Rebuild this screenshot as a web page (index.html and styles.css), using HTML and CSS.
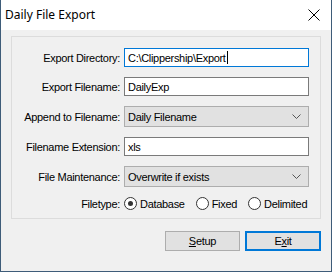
FILE: index.html
```html
<!DOCTYPE html>
<html>
<head>
<meta charset="utf-8">
<link rel="stylesheet" href="styles.css">
</head>
<body>
<div class="window">
  <div class="titlebar">
    <span class="title">Daily File Export</span>
    <svg class="close" width="12" height="12" viewBox="0 0 12 12"><path d="M0.5 0.5 L11.5 11.5 M11.5 0.5 L0.5 11.5" stroke="#000" stroke-width="1" fill="none"/></svg>
  </div>
  <div class="client">
    <div class="group">
      <div class="row">
        <label class="lbl">Export Directory:</label>
        <div class="field input focus"><span>C:\Clippership\Export</span><span class="caret"></span></div>
      </div>
      <div class="row">
        <label class="lbl">Export Filename:</label>
        <div class="field input"><span>DailyExp</span></div>
      </div>
      <div class="row tall">
        <label class="lbl">Append to Filename:</label>
        <div class="field select"><span>Daily Filename</span>
          <svg class="chev" width="9" height="5" viewBox="0 0 9 5"><path d="M0.5 0.5 L4.5 4.5 L8.5 0.5" stroke="#555" stroke-width="1" fill="none"/></svg>
        </div>
      </div>
      <div class="row">
        <label class="lbl">Filename Extension:</label>
        <div class="field input"><span>xls</span></div>
      </div>
      <div class="row tall">
        <label class="lbl">File Maintenance:</label>
        <div class="field select"><span>Overwrite if exists</span>
          <svg class="chev" width="9" height="5" viewBox="0 0 9 5"><path d="M0.5 0.5 L4.5 4.5 L8.5 0.5" stroke="#555" stroke-width="1" fill="none"/></svg>
        </div>
      </div>
      <div class="row radio-row">
        <label class="lbl">Filetype:</label>
        <div class="radios">
          <span class="radio"><span class="dot on"></span>Database</span>
          <span class="radio"><span class="dot"></span>Fixed</span>
          <span class="radio"><span class="dot"></span>Delimited</span>
        </div>
      </div>
    </div>
    <div class="buttons">
      <div class="btn"><span><u>S</u>etup</span></div>
      <div class="btn default"><span>E<u>x</u>it</span></div>
    </div>
  </div>
</div>
</body>
</html>
```
FILE: styles.css
```css
html, body {
  margin: 0;
  padding: 0;
  background: #fff;
}
body {
  width: 332px;
  height: 272px;
  font-family: "Liberation Sans", Arial, sans-serif;
  font-size: 11px;
  letter-spacing: -0.3px;
  color: #000;
}
.window {
  box-sizing: border-box;
  width: 332px;
  height: 272px;
  border: 1px solid #3e5c79;
  border-top: none;
  background: #f0f0f0;
  display: flex;
  flex-direction: column;
}
.titlebar {
  height: 30px;
  background: #fff;
  display: flex;
  align-items: center;
  justify-content: space-between;
  padding: 0 11px 0 4px;
  flex: none;
  letter-spacing: 0;
}
.title {
  font-family: "Noto Sans", "Open Sans", sans-serif;
  font-size: 12px;
  color: #000;
  margin-top: -1px;
}
.close {
  display: block;
  margin-top: -1px;
}
.client {
  flex: 1;
  padding: 6px 10px 0 10px;
}
.group {
  border: 1px solid #dcdcdc;
  height: 183px;
  box-sizing: border-box;
  padding: 11px 0 0 0;
  display: flex;
  flex-direction: column;
  gap: 10px;
}
.row {
  display: grid;
  grid-template-columns: 108px 185px;
  column-gap: 4px;
  align-items: center;
  height: 19px;
}
.row.tall {
  height: 21px;
}
.row.radio-row {
  height: 13px;
}
.lbl {
  text-align: right;
  white-space: nowrap;
}
.field {
  box-sizing: border-box;
  height: 100%;
  display: flex;
  align-items: center;
  padding-left: 3px;
  white-space: nowrap;
}
.input {
  background: #fff;
  border: 1px solid #7a7a7a;
}
.input.focus {
  border-color: #0078d7;
}
.caret {
  display: inline-block;
  width: 1px;
  height: 13px;
  background: #000;
  margin-left: 1px;
}
.select {
  background: #e1e1e1;
  border: 1px solid #adadad;
  justify-content: space-between;
  padding: 0 7px 0 3px;
}
.chev {
  display: block;
}
.radios {
  display: flex;
  align-items: center;
}
.radio {
  display: flex;
  align-items: center;
  margin-right: 11px;
}
.dot {
  box-sizing: border-box;
  width: 13px;
  height: 13px;
  border-radius: 50%;
  border: 1px solid #333;
  background: #fff;
  margin-right: 3px;
  position: relative;
  flex: none;
}
.dot.on::after {
  content: "";
  position: absolute;
  left: 3px;
  top: 3px;
  width: 5px;
  height: 5px;
  border-radius: 50%;
  background: #333;
}
.buttons {
  display: flex;
  justify-content: flex-end;
  gap: 5px;
  margin-top: 12px;
}
.btn {
  box-sizing: border-box;
  height: 20px;
  width: 75px;
  background: #e1e1e1;
  border: 1px solid #adadad;
  display: flex;
  align-items: center;
  justify-content: center;
}
.btn.default {
  width: 76px;
  border: 2px solid #0078d7;
}
```
